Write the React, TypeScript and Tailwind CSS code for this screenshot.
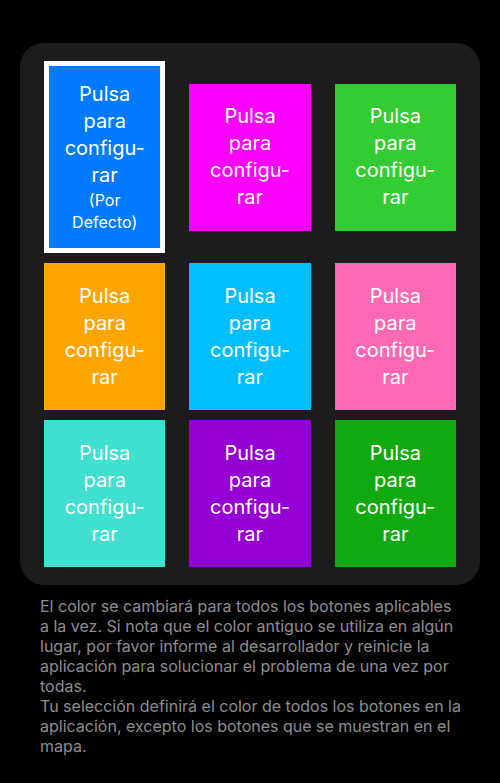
import React from 'react';

const tiles = [
  { color: 'bg-[#007aff]', selected: true },
  { color: 'bg-[#ff00ff]' },
  { color: 'bg-[#33cc33]' },
  { color: 'bg-[#ffa500]' },
  { color: 'bg-[#00bfff]' },
  { color: 'bg-[#ff69b4]' },
  { color: 'bg-[#40e0d0]' },
  { color: 'bg-[#9400d3]' },
  { color: 'bg-[#10a910]' },
];

function Tile({ color, selected }: { color: string; selected?: boolean }) {
  return (
    <button
      className={
        selected
          ? `${color} w-full h-[192px] border-[5px] border-white flex flex-col items-center justify-center text-white`
          : `${color} w-full h-[147px] flex flex-col items-center justify-center text-white`
      }
    >
      <span className="text-[20px] leading-[27px] text-center">
        Pulsa
        <br />
        para
        <br />
        configu-
        <br />
        rar
      </span>
      {selected && (
        <span className="text-[16px] leading-[22px] text-center">
          (Por
          <br />
          Defecto)
        </span>
      )}
    </button>
  );
}

export default function App() {
  const rows = [tiles.slice(0, 3), tiles.slice(3, 6), tiles.slice(6, 9)];

  return (
    <div className="min-h-[783px] bg-black pt-[43px] px-5 font-['Inter',sans-serif]">
      <div className="bg-[#1c1c1e] rounded-[24px] px-6 py-[18px] flex flex-col gap-[10px]">
        {rows.map((row, i) => (
          <div key={i} className="grid grid-cols-3 gap-6 items-center">
            {row.map((t, j) => (
              <Tile key={j} color={t.color} selected={t.selected} />
            ))}
          </div>
        ))}
      </div>
      <p className="mt-[11px] px-5 text-[16px] leading-[20px] text-[#8d8d93] whitespace-nowrap">
        El color se cambiará para todos los botones aplicables
        <br />
        a la vez. Si nota que el color antiguo se utiliza en algún
        <br />
        lugar, por favor informe al desarrollador y reinicie la
        <br />
        aplicación para solucionar el problema de una vez por
        <br />
        todas.
        <br />
        Tu selección definirá el color de todos los botones en la
        <br />
        aplicación, excepto los botones que se muestran en el
        <br />
        mapa.
      </p>
    </div>
  );
}
